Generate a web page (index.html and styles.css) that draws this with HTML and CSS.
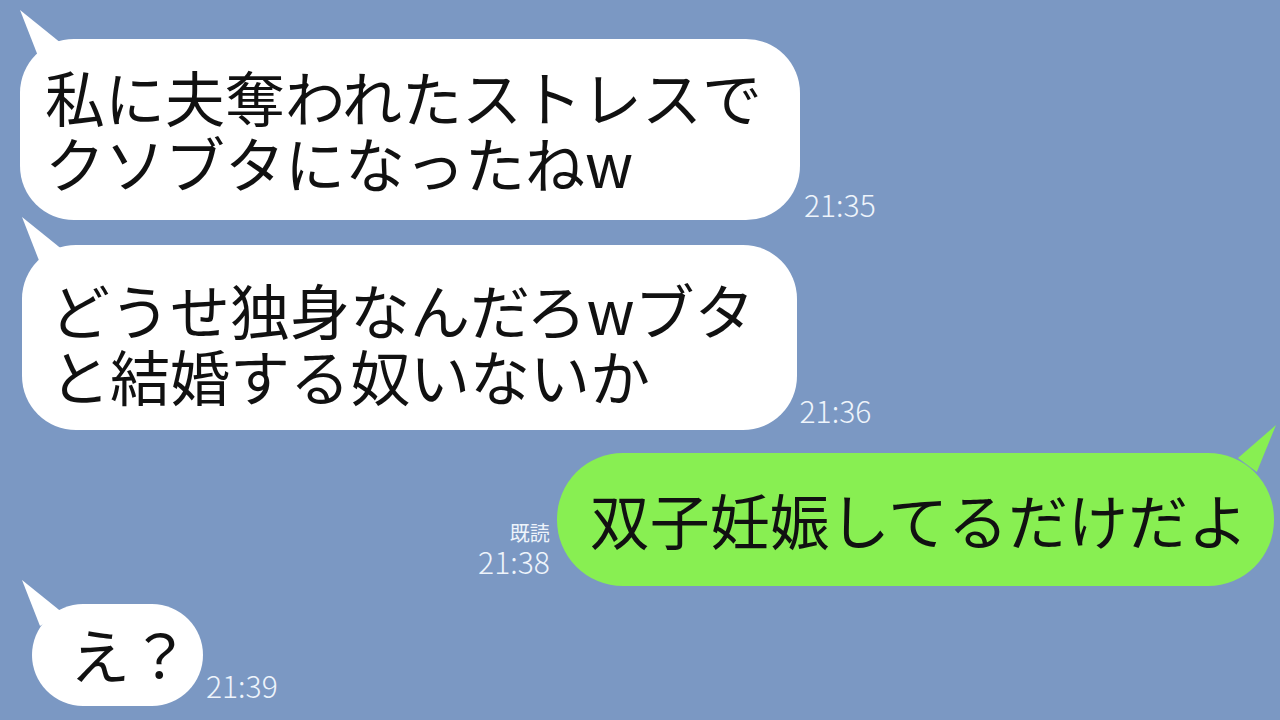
FILE: index.html
```html
<!DOCTYPE html>
<html lang="ja">
<head>
    <meta charset="UTF-8">
    <meta name="viewport" content="width=device-width, initial-scale=1.0">
    <title>トーク</title>
    <link rel="stylesheet" href="styles.css">
</head>
<body>
    <div class="chat">
        <div class="row first">
            <div class="bubble recv b1">
                <span class="tail"></span>
                <p>私に夫奪われたストレスで<br>クソブタになったねw</p>
            </div>
            <div class="meta m1"><span class="time">21:35</span></div>
        </div>

        <div class="row second">
            <div class="bubble recv b2">
                <span class="tail"></span>
                <p>どうせ独身なんだろwブタ<br>と結婚する奴いないか</p>
            </div>
            <div class="meta"><span class="time">21:36</span></div>
        </div>

        <div class="row sent third">
            <div class="meta m3">
                <span class="read">既読</span>
                <span class="time">21:38</span>
            </div>
            <div class="bubble mine b3">
                <span class="tail"></span>
                <p>双子妊娠してるだけだよ</p>
            </div>
        </div>

        <div class="row fourth">
            <div class="bubble recv b4">
                <span class="tail"></span>
                <p>え？</p>
            </div>
            <div class="meta m4"><span class="time">21:39</span></div>
        </div>
    </div>
</body>
</html>
```

FILE: styles.css
```css
html, body {
    margin: 0;
    height: 100%;
}
body {
    background: #7b98c3;
    font-family: "Noto Sans CJK JP", "Noto Sans", sans-serif;
    overflow: hidden;
}
.chat {
    display: flex;
    flex-direction: column;
    padding: 39px 6px 0 20px;
}
.row {
    display: flex;
    align-items: flex-end;
    gap: 3px;
}
.row.second { margin-top: 25px; }
.row.third { margin-top: 23px; }
.row.fourth { margin-top: 18px; }
.row.sent {
    justify-content: flex-end;
    gap: 7px;
}

.bubble {
    position: relative;
    background: #fff;
    color: #111;
}
.bubble p {
    margin: 0;
    font-size: 60px;
    line-height: 66px;
    white-space: nowrap;
}
.b1 {
    padding: 24px 38px 25px 25px;
    border-radius: 54px;
}
.b2 {
    margin-left: 2px;
    padding: 31px 42px 22px 28px;
    border-radius: 54px;
}
.b3 {
    background: #88ef52;
    padding: 33px 26px 34px 33px;
    border-radius: 66px;
}
.b4 {
    margin-left: 12px;
    padding: 16px 13px 20px 38px;
    border-radius: 51px;
}

.tail {
    position: absolute;
    width: 40px;
    height: 46px;
    top: -29px;
    left: 0;
    background: #fff;
    clip-path: polygon(0 0, 100% 70%, 45% 100%);
}
.b2 .tail { top: -28px; }
.b4 .tail { top: -24px; left: -10px; }
.b3 .tail {
    left: auto;
    right: -2px;
    top: -28px;
    height: 48px;
    background: #88ef52;
    clip-path: polygon(100% 0, 52% 98%, 5% 69%);
}

.meta {
    display: flex;
    flex-direction: column;
    align-items: flex-end;
    color: #eef4fb;
    margin-bottom: 5px;
}
.m1 { margin-bottom: 1px; margin-left: 1px; }
.m3 { margin-bottom: 10px; }
.m4 { margin-bottom: 6px; }
.time {
    font-size: 30px;
    line-height: 30px;
    font-weight: 300;
}
.read {
    font-size: 20px;
    line-height: 24px;
    margin-bottom: 1px;
}
```
